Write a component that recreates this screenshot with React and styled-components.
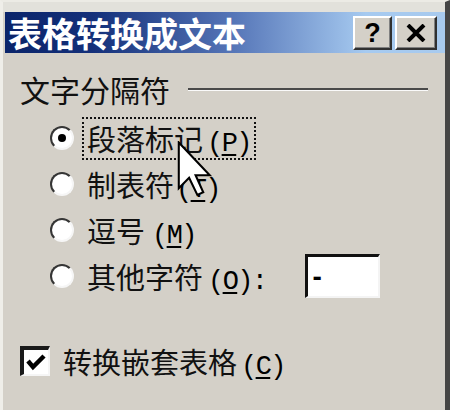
import React from 'react';
import styled, { createGlobalStyle } from 'styled-components';

const Global = createGlobalStyle`
  html, body {
    margin: 0;
    padding: 0;
    overflow: hidden;
    background: #d4d0c8;
  }
  body {
    font-family: "Noto Sans CJK SC", "Noto Sans", sans-serif;
  }
`;

const Window = styled.div`
  position: relative;
  width: 450px;
  height: 410px;
  box-sizing: border-box;
  overflow: hidden;
  border-left: 3px solid #efeee9;
  border-right: 5px solid #454545;
  border-top: 2px solid #ecebe5;
  padding: 10px 0 0 2px;
  background: linear-gradient(#e2e1db 0 10px, #d4d0c8 10px);
`;

const TitleBar = styled.div`
  display: flex;
  align-items: center;
  height: 41px;
  padding: 0 8px 0 3px;
  background: linear-gradient(90deg, #0a246a 0%, #14307a 20%, #5676b8 52%, #a6caf0 82%, #a8caee 100%);
`;

const Title = styled.div`
  flex: 1;
  color: #fff;
  font-size: 34px;
  font-weight: 700;
  line-height: 41px;
  white-space: nowrap;
`;

const CaptionButton = styled.div`
  width: ${p => p.$w}px;
  height: 34px;
  margin-left: 3px;
  box-sizing: border-box;
  display: grid;
  place-items: center;
  background: #d4d0c8;
  border: 2px solid;
  border-color: #fff #303030 #303030 #fff;
  box-shadow: inset -1px -1px 0 #808080;
  font-family: "Liberation Sans", Arial, sans-serif;
  font-weight: 700;
  font-size: 27px;
  color: #000;
`;

const Body = styled.div`
  padding: 20px 17px 0 15px;
`;

const GroupHead = styled.div`
  display: flex;
  align-items: center;
  height: 32px;
  font-size: 30px;
  color: #111;
`;

const Rule = styled.div`
  flex: 1;
  margin-left: 18px;
  border-top: 2px solid #4a4a4a;
  border-bottom: 1px solid #fafafa;
`;

const Options = styled.div`
  margin: 10px 0 0 30px;
`;

const Row = styled.div`
  display: flex;
  align-items: center;
  height: 46px;
`;

const Radio = styled.div`
  width: 24px;
  height: 24px;
  box-sizing: border-box;
  border-radius: 50%;
  border: 2px solid;
  border-color: #353535 #f6f6f6 #f6f6f6 #353535;
  background: #fff;
  display: grid;
  place-items: center;

  &::after {
    content: '';
    width: 8px;
    height: 8px;
    border-radius: 50%;
    background: ${p => (p.$checked ? '#000' : 'transparent')};
  }
`;

const Label = styled.div`
  margin-left: 8px;
  padding: 0 3px;
  height: 43px;
  box-sizing: border-box;
  border: 2px dotted ${p => (p.$focused ? '#111' : 'transparent')};
  font-size: 29px;
  line-height: 39px;
  color: #111;
  white-space: nowrap;
`;

const Key = styled.span`
  margin-left: ${p => p.$gap || 3}px;
  font-family: "Liberation Mono", "Courier New", monospace;
  font-size: 27px;
  letter-spacing: -1.6px;
  color: #000;

  u {
    text-decoration-thickness: 2px;
    text-underline-offset: 3px;
  }
`;

const TextBox = styled.input`
  margin-left: 34px;
  width: 75px;
  height: 44px;
  box-sizing: border-box;
  border-style: solid;
  border-width: 3px 2px 2px 3px;
  border-color: #111 #f4f4f4 #f4f4f4 #111;
  background: #fff;
  padding: 0 0 0 4px;
  font-family: "Liberation Sans", Arial, sans-serif;
  font-size: 28px;
  font-weight: 700;
  color: #000;
  outline: none;
`;

const CheckRow = styled.div`
  display: flex;
  align-items: center;
  height: 46px;
  margin-top: 39px;
`;

const CheckBox = styled.div`
  width: 30px;
  height: 30px;
  box-sizing: border-box;
  border-style: solid;
  border-width: 4px 2px 2px 4px;
  border-color: #1a1a1a #f5f5f5 #f5f5f5 #1a1a1a;
  background: #fff;
  display: grid;
  place-items: center;
`;

const CheckText = styled.div`
  margin-left: 13px;
  font-size: 29px;
  color: #111;
  white-space: nowrap;
`;

const Buttons = styled.div`
  display: flex;
  gap: 20px;
  margin: 26px 0 0 1px;
`;

const PushButton = styled.div`
  width: ${p => p.$w}px;
  height: 46px;
  box-sizing: border-box;
  background: #d4d0c8;
  border: 2px solid;
  border-color: ${p => (p.$default ? '#222' : '#fff')} #404040 #404040 ${p => (p.$default ? '#222' : '#fff')};
`;

const Cursor = styled.svg`
  position: absolute;
  left: 174px;
  top: 139px;
`;

const Option = ({ checked, focused, children }) => (
  <Row>
    <Radio $checked={checked} />
    <Label $focused={focused}>{children}</Label>
  </Row>
);

export default function App() {
  return (
    <>
      <Global />
      <Window>
        <TitleBar>
          <Title>表格转换成文本</Title>
          <CaptionButton $w={39}>?</CaptionButton>
          <CaptionButton $w={42}>
            <svg width="20" height="18" viewBox="0 0 20 18">
              <path d="M2 1 L18 17 M18 1 L2 17" stroke="#000" strokeWidth="4" />
            </svg>
          </CaptionButton>
        </TitleBar>
        <Body>
          <GroupHead>
            文字分隔符
            <Rule />
          </GroupHead>
          <Options>
            <Option checked focused>
              段落标记<Key $gap={4}>(<u>P</u>)</Key>
            </Option>
            <Option>
              制表符<Key $gap={2}>(<u>T</u>)</Key>
            </Option>
            <Option>
              逗号<Key $gap={7}>(<u>M</u>)</Key>
            </Option>
            <Row>
              <Radio />
              <Label>
                其他字符<Key $gap={5}>(<u>O</u>):</Key>
              </Label>
              <TextBox readOnly value="-" />
            </Row>
          </Options>
          <CheckRow>
            <CheckBox>
              <svg width="20" height="18" viewBox="0 0 20 18">
                <path d="M2 8 L7 14 L18 3" stroke="#000" strokeWidth="4.5" fill="none" />
              </svg>
            </CheckBox>
            <CheckText>
              转换嵌套表格<Key $gap={4}>(<u>C</u>)</Key>
            </CheckText>
          </CheckRow>
          <Buttons>
            <PushButton $w={192} $default />
            <PushButton $w={197} />
          </Buttons>
        </Body>
        <Cursor width="36" height="56" viewBox="0 0 12 19">
          <path
            d="M0.5 0.5 L0.5 16 L4 12.5 L6.8 18.3 L8.8 17.4 L6.2 11.6 L11 11.6 Z"
            fill="#fff"
            stroke="#000"
            strokeWidth="0.7"
            strokeLinejoin="miter"
          />
        </Cursor>
      </Window>
    </>
  );
}
